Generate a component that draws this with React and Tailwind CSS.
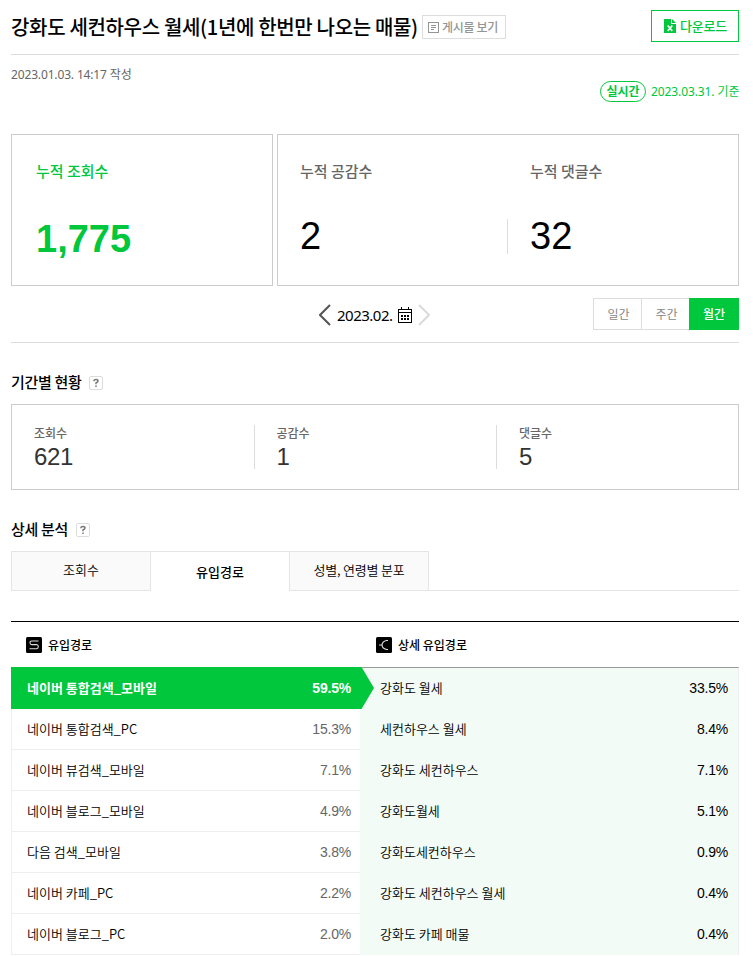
const sources = [
  { name: '네이버 통합검색_모바일', rate: '59.5%', active: true },
  { name: '네이버 통합검색_PC', rate: '15.3%' },
  { name: '네이버 뷰검색_모바일', rate: '7.1%' },
  { name: '네이버 블로그_모바일', rate: '4.9%' },
  { name: '다음 검색_모바일', rate: '3.8%' },
  { name: '네이버 카페_PC', rate: '2.2%' },
  { name: '네이버 블로그_PC', rate: '2.0%' },
];

const keywords = [
  { name: '강화도 월세', rate: '33.5%' },
  { name: '세컨하우스 월세', rate: '8.4%' },
  { name: '강화도 세컨하우스', rate: '7.1%' },
  { name: '강화도월세', rate: '5.1%' },
  { name: '강화도세컨하우스', rate: '0.9%' },
  { name: '강화도 세컨하우스 월세', rate: '0.4%' },
  { name: '강화도 카페 매물', rate: '0.4%' },
];

const periodStats = [
  { label: '조회수', value: '621' },
  { label: '공감수', value: '1' },
  { label: '댓글수', value: '5' },
];

function Help() {
  return (
    <svg className="mt-[3px] h-[14px] w-[14px]" viewBox="0 0 14 14" fill="none">
      <rect x="0.5" y="0.5" width="13" height="13" rx="1.5" stroke="#dcdcdc" />
      <path d="M5 5.2V4.6Q5 3.6 7 3.6Q9 3.6 9 5Q9 6 7 6.9V8.3M7 9.4V11" stroke="#777" strokeWidth="1.5" />
    </svg>
  );
}

function PostIcon() {
  return (
    <svg className="h-[11px] w-[11px]" viewBox="0 0 11 11" fill="none" stroke="#959595" shapeRendering="crispEdges">
      <rect x="0.5" y="0.5" width="10" height="10" />
      <path d="M3 3.5h5M3 5.5h5M3 7.5h3" />
    </svg>
  );
}

function ExcelIcon() {
  return (
    <svg className="h-[14px] w-[12px]" viewBox="0 0 12 14">
      <path d="M0 0h7v5h5v9H0z" fill="#00c73c" />
      <path d="M8 0l4 4H8z" fill="#00c73c" />
      <path d="M3.7 6.5l4.6 5.5M8.3 6.5l-4.6 5.5" stroke="#fff" strokeWidth="1.6" />
    </svg>
  );
}

function CalendarIcon() {
  return (
    <svg className="h-4 w-[14px]" viewBox="0 0 14 16" fill="none" stroke="#000" shapeRendering="crispEdges">
      <path d="M0.5 2.5h13v13H0.5zM0 5.5h14M3.5 0v3M10.5 0v3" />
      <path d="M3 9h2M6 9h2M9 9h2M3 12h2M6 12h2M9 12h2" strokeWidth="2" />
    </svg>
  );
}

function Arrow({ next }) {
  return (
    <svg className="h-[22px] w-[12px]" viewBox="0 0 12 22" fill="none" strokeWidth="2">
      {next
        ? <path d="M1 1l10 10L1 21" stroke="#dadada" />
        : <path d="M11 1L1 11l10 10" stroke="#555" />}
    </svg>
  );
}

function SourceIcon() {
  return (
    <svg className="h-4 w-4" viewBox="0 0 16 16" fill="none">
      <rect width="16" height="16" rx="1.5" fill="#000" />
      <path d="M12.5 4H5.7Q4 4 4 5.8T5.7 7.6H10.6Q12.3 7.6 12.3 9.6T10.6 11.8H3.5" stroke="#ddd" strokeWidth="1.1" />
    </svg>
  );
}

function BranchIcon() {
  return (
    <svg className="h-4 w-4" viewBox="0 0 16 16" fill="none">
      <rect width="16" height="16" rx="1.5" fill="#000" />
      <path d="M3 8h3M12 3.5H10.5Q6.2 4.5 6 8Q6.2 11.5 10.5 12.5H12" stroke="#ddd" strokeWidth="1.2" />
    </svg>
  );
}

export default function App() {
  return (
    <div className="h-[956px] w-[753px] overflow-hidden bg-white pl-[11px] pr-[14px] font-['Noto_Sans_CJK_KR',sans-serif] text-black">
      <header className="flex h-[55px] items-center border-b border-[#ddd]">
        <h1 className="w-[411px] whitespace-nowrap text-[20px] font-medium leading-[30px] tracking-[-0.33px]">강화도 세컨하우스 월세(1년에 한번만 나오는 매물)</h1>
        <button className="flex h-6 w-[84px] items-center gap-[3px] whitespace-nowrap border border-[#ddd] pl-[5px] text-[12px] font-medium tracking-[-0.3px] text-[#959595]">
          <PostIcon />
          게시물 보기
        </button>
        <button className="mb-0.5 ml-auto flex h-8 w-[88px] items-center gap-1 whitespace-nowrap border border-[#00c73c] pl-[12px] text-[13px] font-medium tracking-[-0.2px] text-[#00c73c]">
          <ExcelIcon />
          다운로드
        </button>
      </header>

      <div className="flex h-[79px] justify-between whitespace-nowrap font-['Noto_Sans','Noto_Sans_CJK_KR',sans-serif] text-[12px] leading-5">
        <p className="pt-[10px] tracking-[-0.15px] text-[#666]">2023.01.03. 14:17 작성</p>
        <p className="mt-[26px] flex h-[21px] items-center gap-[5px] text-[#00c73c]">
          <span className="flex h-[21px] w-[46px] items-center justify-center rounded-full border border-[#00c73c] font-bold">실시간</span>
          <span className="w-[88px] tracking-[-0.1px]">2023.03.31. 기준</span>
        </p>
      </div>

      <section className="flex h-[152px] gap-1 whitespace-nowrap">
        <div className="w-[262px] border border-[#ccc] pl-6 pt-[25px] text-[#00c73c]">
          <h2 className="text-[15px] font-medium leading-[22px]">누적 조회수</h2>
          <p className="mt-[34px] font-['Liberation_Sans',sans-serif] text-[38px] font-bold leading-[46px]">1,775</p>
        </div>
        <div className="flex w-[462px] border border-[#ccc] pt-[25px]">
          <div className="w-[230px] pl-[22px]">
            <h2 className="text-[15px] font-medium leading-[22px] text-[#666]">누적 공감수</h2>
            <p className="mt-[37px] flex h-[35px] items-center border-r border-[#ddd] font-['Liberation_Sans',sans-serif] text-[38px]">2</p>
          </div>
          <div className="pl-[22px]">
            <h2 className="text-[15px] font-medium leading-[22px] text-[#666]">누적 댓글수</h2>
            <p className="mt-[37px] flex h-[35px] items-center font-['Liberation_Sans',sans-serif] text-[38px]">32</p>
          </div>
        </div>
      </section>

      <div className="flex h-[57px] items-center border-b border-[#ddd]">
        <div className="ml-[308px] mt-[2px] flex items-center whitespace-nowrap">
          <Arrow />
          <span className="ml-[6px] w-[62px] font-['Noto_Sans',sans-serif] text-[15px] leading-5 tracking-[-0.5px]">2023.02.</span>
          <span className="-ml-px"><CalendarIcon /></span>
          <span className="ml-[6px]"><Arrow next /></span>
        </div>
        <div className="ml-auto flex h-8 w-[146px] text-center text-[12px] leading-[30px]">
          <button className="w-12 border border-r-0 border-[#ddd] pl-0.5 text-[#888]">일간</button>
          <button className="w-12 border border-r-0 border-[#ddd] pl-0.5 text-[#888]">주간</button>
          <button className="w-[50px] bg-[#00c73c] font-medium text-white">월간</button>
        </div>
      </div>

      <div className="flex h-[61px] items-center gap-[7px] pt-4">
        <h2 className="text-[15px] font-medium leading-5 tracking-[-0.3px]">기간별 현황</h2>
        <Help />
      </div>
      <section className="flex h-[86px] border border-[#ccc] pt-5">
        {periodStats.map((s, i) => (
          <div key={s.label} className={i < 2 ? 'h-11 w-[242.5px] border-r border-[#ddd] pl-[22px]' : 'h-11 pl-[22px]'}>
            <h3 className="text-[12px] font-medium leading-[16px] text-[#666]">{s.label}</h3>
            <p className="font-['Liberation_Sans',sans-serif] text-[24px] leading-[32px] tracking-[-0.4px] text-[#333]">{s.value}</p>
          </div>
        ))}
      </section>

      <div className="flex h-[61px] items-center gap-2 pt-4">
        <h2 className="text-[15px] font-medium leading-5 tracking-[-0.3px]">상세 분석</h2>
        <Help />
      </div>
      <div className="flex h-10 text-center text-[13px] leading-[36px]">
        <button className="w-[140px] border border-[#e5e5e5] bg-[#fafafa] pb-0.5 font-[350]">조회수</button>
        <button className="w-[138px] border-t border-[#e5e5e5] font-medium">유입경로</button>
        <button className="w-[140px] border border-[#e5e5e5] bg-[#fafafa] pb-0.5 font-[350] tracking-[-0.2px]">성별, 연령별 분포</button>
        <div className="flex-1 border-b border-[#e5e5e5]" />
      </div>

      <section className="mt-[30px] border-t border-black">
        <div className="flex h-[45px] items-center text-[12px] font-medium">
          <h3 className="flex w-[350px] items-center gap-1.5 pl-[15px]"><SourceIcon />유입경로</h3>
          <h3 className="flex items-center gap-1.5 pl-[15px]"><BranchIcon />상세 유입경로</h3>
        </div>
        <div className="flex whitespace-nowrap text-[13px] font-[350]">
          <ul className="w-[349px]">
            {sources.map((s) => (s.active ? (
              <li key={s.name} className="relative flex h-[42px] items-center justify-between bg-[#00c73c] pl-4 pr-[9px] font-bold text-white">
                <span>{s.name}</span>
                <span className="font-['Liberation_Sans',sans-serif] text-[14px] tracking-[-0.2px]">{s.rate}</span>
                <svg className="absolute left-full top-0 h-[42px] w-[14px]" viewBox="0 0 14 42">
                  <path d="M0 0h1.5L14 21 1.5 42H0z" fill="#00c73c" />
                </svg>
              </li>
            ) : (
              <li key={s.name} className="flex h-[41px] items-center justify-between border-b border-l border-[#eee] pl-[15px] pr-[9px]">
                <span>{s.name}</span>
                <span className="font-['Liberation_Sans',sans-serif] text-[14px] tracking-[-0.2px] text-[#666]">{s.rate}</span>
              </li>
            )))}
          </ul>
          <ul className="w-[379px] border-r border-t border-r-[#eee] border-t-[#999] bg-[#f2fbf5]">
            {keywords.map((k) => (
              <li key={k.name} className="flex h-[41px] items-center justify-between pl-[20px] pr-[10px]">
                <span className="mb-0.5">{k.name}</span>
                <span className="font-['Liberation_Sans',sans-serif] text-[14px] tracking-[-0.2px]">{k.rate}</span>
              </li>
            ))}
          </ul>
        </div>
      </section>
    </div>
  );
}
